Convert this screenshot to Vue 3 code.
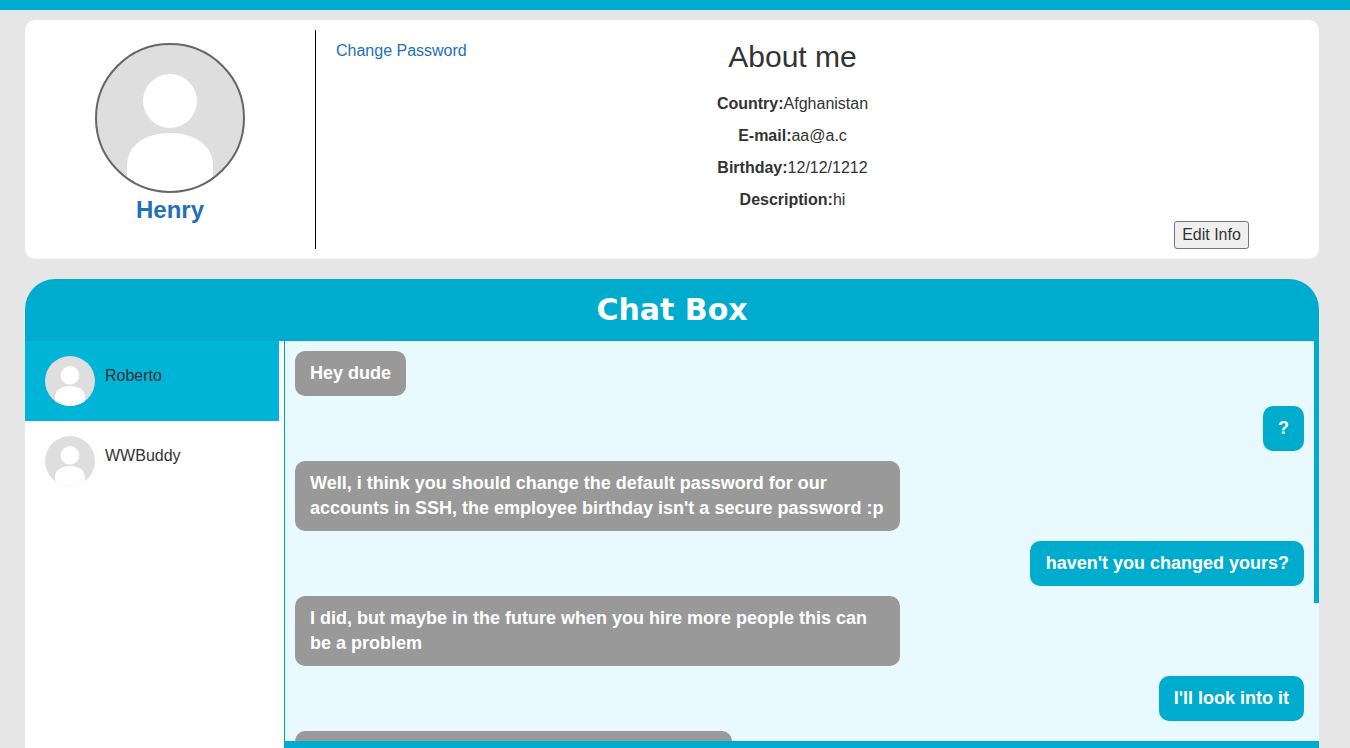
<script setup>
const details = [
  { label: 'Country:', value: 'Afghanistan' },
  { label: 'E-mail:', value: 'aa@a.c' },
  { label: 'Birthday:', value: '12/12/1212' },
  { label: 'Description:', value: 'hi' }
]
const contacts = [
  { name: 'Roberto', active: true },
  { name: 'WWBuddy', active: false }
]
const messages = [
  { text: 'Hey dude', mine: false },
  { text: '?', mine: true },
  { text: "Well, i think you should change the default password for our accounts in SSH, the employee birthday isn't a secure password :p", mine: false },
  { text: "haven't you changed yours?", mine: true },
  { text: 'I did, but maybe in the future when you hire more people this can be a problem', mine: false },
  { text: "I'll look into it", mine: true },
  { text: 'OK, just tell me when you have it all done, mate', mine: false }
]
</script>

<template>
  <div class="page">
    <div class="topbar"></div>
    <section class="profile">
      <div class="identity">
        <svg class="big-avatar" viewBox="0 0 150 150">
          <defs>
            <clipPath id="bigClip"><circle cx="75" cy="75" r="74" /></clipPath>
          </defs>
          <circle cx="75" cy="75" r="74" fill="#dedede" />
          <g clip-path="url(#bigClip)" fill="#fff">
            <circle cx="75" cy="58" r="27" />
            <path d="M32 150V123C32 101 52 90 75 90S118 101 118 123V150Z" />
          </g>
          <circle cx="75" cy="75" r="74" fill="none" stroke="#666" stroke-width="2" />
        </svg>
        <a class="username">Henry</a>
      </div>
      <div class="links">
        <a class="link">Change Password</a>
      </div>
      <div class="about">
        <h2>About me</h2>
        <p v-for="d in details" :key="d.label"><b>{{ d.label }}</b>{{ d.value }}</p>
      </div>
      <div class="actions">
        <button type="button">Edit Info</button>
      </div>
    </section>

    <section class="chat">
      <header>Chat Box</header>
      <div class="chat-body">
        <aside>
          <div v-for="c in contacts" :key="c.name" class="contact" :class="{ active: c.active }">
            <svg class="avatar" viewBox="0 0 150 150">
              <defs>
                <clipPath :id="'clip' + c.name"><circle cx="75" cy="75" r="75" /></clipPath>
              </defs>
              <circle cx="75" cy="75" r="75" fill="#dedede" />
              <g :clip-path="'url(#clip' + c.name + ')'" fill="#fff">
                <circle cx="75" cy="58" r="28" />
                <path d="M30 150V123C30 101 52 90 75 90S120 101 120 123V150Z" />
              </g>
            </svg>
            <span class="name">{{ c.name }}</span>
          </div>
        </aside>
        <div class="messages">
          <div v-for="(m, i) in messages" :key="i" class="msg" :class="m.mine ? 'mine' : 'theirs'">{{ m.text }}</div>
          <div class="thumb"></div>
        </div>
      </div>
    </section>
  </div>
</template>

<style>
html, body { margin: 0; height: 748px; overflow: hidden; background: #e6e6e6; }
</style>

<style scoped>
.page {
  height: 748px;
  overflow: hidden;
  background: #e6e6e6;
  font-family: "Liberation Sans", Arial, sans-serif;
  font-size: 16px;
  color: #333;
  box-sizing: border-box;
}
.topbar { height: 10px; background: #00acce; }
.profile {
  margin: 10px 31px 20px 25px;
  height: 239px;
  box-sizing: border-box;
  padding: 10px 0;
  background: #fff;
  border-radius: 10px;
  display: flex;
}
.identity {
  width: 291px;
  height: 219px;
  box-sizing: border-box;
  border-right: 1px solid #000;
  display: flex;
  flex-direction: column;
  align-items: center;
  padding: 13px 0 0 0;
  flex: none;
}
.big-avatar { width: 150px; height: 150px; display: block; flex: none; }
.username {
  margin-top: 3px;
  font-size: 24px;
  line-height: 28px;
  font-weight: 700;
  color: #2270b9;
}
.links { width: 240px; flex: none; padding: 10px 0 0 20px; box-sizing: border-box; }
.link { color: #2270b9; line-height: 21px; display: block; }
.about { width: 473px; flex: none; text-align: center; padding-top: 9px; box-sizing: border-box; }
.about h2 { margin: 0 0 20px; font-size: 30px; line-height: 36px; font-weight: 400; color: #333; }
.about p { margin: 0 0 14px; line-height: 18px; }
.actions { flex: 1; display: flex; align-items: flex-end; justify-content: flex-end; padding-right: 70px; }
button {
  font-family: inherit;
  font-size: 16px;
  color: #333;
  height: 28px;
  width: 75px;
  padding: 0;
  background: #efefef;
  border: 1px solid #767676;
  border-radius: 3px;
}
.chat {
  margin: 0 31px 0 25px;
  background: #fff;
  border-radius: 30px 30px 0 0;
  overflow: hidden;
}
header {
  height: 62px;
  background: #00acce;
  color: #fff;
  font-family: "DejaVu Sans", sans-serif;
  font-weight: 700;
  font-size: 30px;
  line-height: 62px;
  text-align: center;
}
.chat-body { display: flex; height: 407px; }
aside { width: 254px; flex: none; margin-right: 5px; }
.contact {
  height: 80px;
  box-sizing: border-box;
  padding: 15px 0 0 20px;
  display: flex;
  gap: 10px;
  align-items: flex-start;
}
.contact.active { background: #00b4d8; }
.avatar { width: 50px; height: 50px; display: block; flex: none; }
.name { line-height: 18px; margin-top: 11px; }
.messages {
  position: relative;
  flex: 1;
  min-width: 0;
  height: 407px;
  box-sizing: border-box;
  border-left: 1px solid #00a0b8;
  border-bottom: 7px solid #00acce;
  background: #e8f9ff;
  padding: 10px 15px 0 10px;
  overflow: hidden;
  display: flex;
  flex-direction: column;
  gap: 10px;
}
.msg {
  flex: none;
  box-sizing: border-box;
  max-width: 605px;
  padding: 10px 15px;
  border-radius: 10px;
  color: #fff;
  font-weight: 700;
  font-size: 18px;
  line-height: 25px;
}
.theirs { align-self: flex-start; background: #999; }
.mine { align-self: flex-end; background: #00acce; text-align: right; }
.mine:nth-child(4) { min-width: 274px; }
.theirs:nth-child(7) { min-width: 437px; }
.thumb {
  position: absolute;
  top: 0;
  right: 0;
  width: 5px;
  height: 262px;
  background: #00acce;
}
</style>
